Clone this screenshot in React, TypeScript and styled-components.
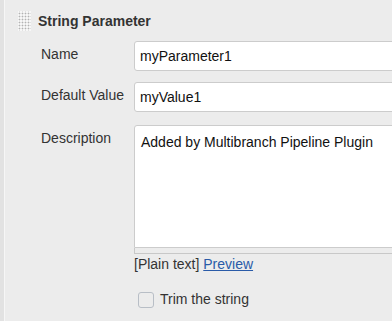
import React, { useState } from "react";
import styled, { createGlobalStyle } from "styled-components";

const GlobalStyle = createGlobalStyle`
  html, body {
    margin: 0;
    background: #ececec;
    overflow: hidden;
  }
  body {
    font-family: "Liberation Sans", Arial, sans-serif;
    font-size: 14px;
    color: #333;
  }
`;

const Page = styled.div`
  display: flex;
  width: 392px;
  min-height: 321px;
  overflow: hidden;
`;

const Rail = styled.div`
  width: 4px;
  background: #e2e2e2;
  border-right: 1px solid #f6f6f6;
  flex-shrink: 0;
`;

const Chunk = styled.div`
  flex-shrink: 0;
  width: 480px;
  padding: 11px 0 0 13px;
`;

const Header = styled.div`
  display: flex;
  align-items: center;
  gap: 7px;
`;

const Grip = styled.div`
  width: 13px;
  height: 20px;
  background-color: #f7f7f7;
  background-image: radial-gradient(circle, #b3b3b3 0.8px, transparent 1.1px);
  background-size: 3px 3px;
  background-position: 0 1px;
`;

const Title = styled.div`
  font-weight: bold;
  font-size: 14px;
  color: #333;
  line-height: 17px;
  padding-top: 1px;
`;

const Form = styled.div`
  display: grid;
  grid-template-columns: 93px 1fr;
  row-gap: 11px;
  margin: 10px 0 0 23px;
`;

const Label = styled.label<{ $top?: number }>`
  padding-top: ${(p) => p.$top ?? 5}px;
  line-height: 17px;
  color: #333;
`;

const TextInput = styled.input`
  box-sizing: border-box;
  height: 30px;
  width: 100%;
  border: 1px solid #cccccc;
  border-radius: 3px;
  padding: 0 5px;
  font-family: inherit;
  font-size: 14px;
  color: #111;
  background: #fff;
  outline: none;
`;

const AreaBox = styled.div`
  margin-top: 2px;
  display: flex;
  flex-direction: column;
`;

const TextArea = styled.textarea`
  box-sizing: border-box;
  height: 123px;
  width: 100%;
  border: 1px solid #cccccc;
  border-radius: 3px 0 0 0;
  padding: 8px 6px;
  font-family: inherit;
  font-size: 14px;
  line-height: 17px;
  color: #111;
  background: #fff;
  resize: none;
  outline: none;
  display: block;
`;

const Handle = styled.div`
  height: 5px;
  border: 1px solid #c8c8c8;
  border-top: none;
  background: #ececec;
`;

const Hint = styled.div`
  margin-top: 2px;
  line-height: 17px;
  color: #333;
`;

const PreviewLink = styled.a`
  color: #2a5ba8;
  text-decoration: underline;
`;

const Options = styled.label`
  grid-column: 2;
  display: flex;
  align-items: center;
  gap: 6px;
  margin: 7px 0 0 4px;
  line-height: 17px;
  color: #333;
`;

const Check = styled.span<{ $on: boolean }>`
  box-sizing: border-box;
  width: 16px;
  height: 16px;
  border: 1.5px solid #b8bec6;
  border-radius: 3px;
  background: ${(p) => (p.$on ? "#4a90d9" : "transparent")};
`;

const App: React.FC = () => {
  const [trim, setTrim] = useState(false);

  return (
    <Page>
      <GlobalStyle />
      <Rail />
      <Chunk>
        <Header>
          <Grip />
          <Title>String Parameter</Title>
        </Header>
        <Form>
          <Label htmlFor="name">Name</Label>
          <TextInput id="name" defaultValue="myParameter1" />
          <Label htmlFor="value">Default Value</Label>
          <TextInput id="value" defaultValue="myValue1" />
          <Label htmlFor="desc" $top={7}>
            Description
          </Label>
          <AreaBox>
            <TextArea
              id="desc"
              defaultValue="Added by Multibranch Pipeline Plugin"
            />
            <Handle />
            <Hint>
              [Plain text] <PreviewLink href="#">Preview</PreviewLink>
            </Hint>
          </AreaBox>
          <Options onClick={() => setTrim(!trim)}>
            <Check $on={trim} />
            Trim the string
          </Options>
        </Form>
      </Chunk>
    </Page>
  );
};

export default App;
